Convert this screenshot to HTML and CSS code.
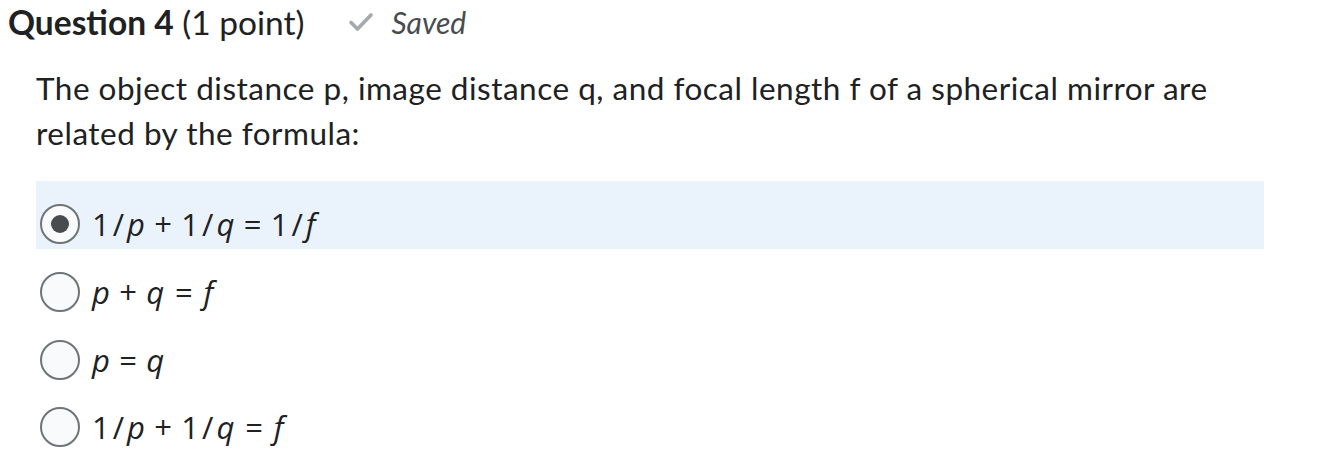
FILE: index.html
```html
<!DOCTYPE html>
<html>
<head>
<meta charset="utf-8">
<link rel="stylesheet" href="styles.css">
</head>
<body>
<div class="question">
  <div class="header">
    <h2 class="title"><strong>Question 4</strong> <span class="points">(1 point)</span></h2>
    <div class="saved">
      <svg class="check" width="26" height="20" viewBox="0 0 26 20"><path d="M3 10.5 L9.5 17 L23 3" fill="none" stroke="#a3a9ad" stroke-width="3.6" stroke-linecap="round" stroke-linejoin="round"/></svg>
      <span class="saved-text">Saved</span>
    </div>
  </div>
  <p class="prompt">The object distance p, image distance q, and focal length f of a spherical mirror are related by the formula:</p>
  <div class="options">
    <label class="option selected"><span class="radio"><span class="dot"></span></span><span class="math"><span class="frac">1/</span><i>p</i><span class="op">+</span><span class="frac">1/</span><i>q</i><span class="op">=</span><span class="frac">1/</span><i>f</i></span></label>
    <label class="option"><span class="radio"></span><span class="math"><i>p</i><span class="op">+</span><i>q</i><span class="op eq">=</span><i>f</i></span></label>
    <label class="option short"><span class="radio"></span><span class="math"><i>p</i><span class="op">=</span><i>q</i></span></label>
    <label class="option"><span class="radio"></span><span class="math"><span class="frac">1/</span><i>p</i><span class="op">+</span><span class="frac">1/</span><i>q</i><span class="op eq">=</span><i>f</i></span></label>
  </div>
</div>
</body>
</html>
```

FILE: styles.css
```css
html, body {
  margin: 0;
  padding: 0;
  background: #ffffff;
}
body {
  font-family: Lato, "Open Sans", sans-serif;
  color: #202122;
}
.question {
  padding: 0 70px 0 8px;
}
.header {
  display: flex;
  align-items: center;
  height: 44px;
}
.title {
  margin: 0;
  font-size: 33.5px;
  font-weight: 400;
  color: #202122;
}
.title strong {
  font-weight: 700;
}
.saved {
  display: flex;
  align-items: center;
  margin-left: 44px;
  gap: 17px;
}
.check {
  display: block;
}
.saved-text {
  font-style: italic;
  font-size: 30px;
  color: #494c4e;
}
.prompt {
  margin: 22px 0 0 28px;
  font-size: 31.5px;
  letter-spacing: 0.5px;
  line-height: 45px;
  color: #202122;
}
.options {
  margin: 25px 0 0 28px;
  display: flex;
  flex-direction: column;
}
.option {
  box-sizing: border-box;
  display: flex;
  align-items: center;
  height: 68px;
  padding: 18px 0 0 4px;
  gap: 12px;
}
.option.selected {
  background: #eaf3fc;
}
.option.short { height: 67px; }
.radio {
  box-sizing: border-box;
  width: 40px;
  height: 40px;
  border-radius: 50%;
  border: 2px solid #6f7478;
  background: #f9fafc;
  display: flex;
  align-items: center;
  justify-content: center;
  flex: none;
}
.dot {
  width: 18px;
  height: 18px;
  border-radius: 50%;
  background: #494c4e;
}
.math {
  font-family: "Open Sans", sans-serif;
  font-size: 31px;
  color: #202122;
}
.math i {
  font-style: italic;
}
.frac {
  letter-spacing: 3px;
}
.op {
  margin: 0 0.3em;
}
.op.eq {
  margin: 0 0.35em;
}
```
